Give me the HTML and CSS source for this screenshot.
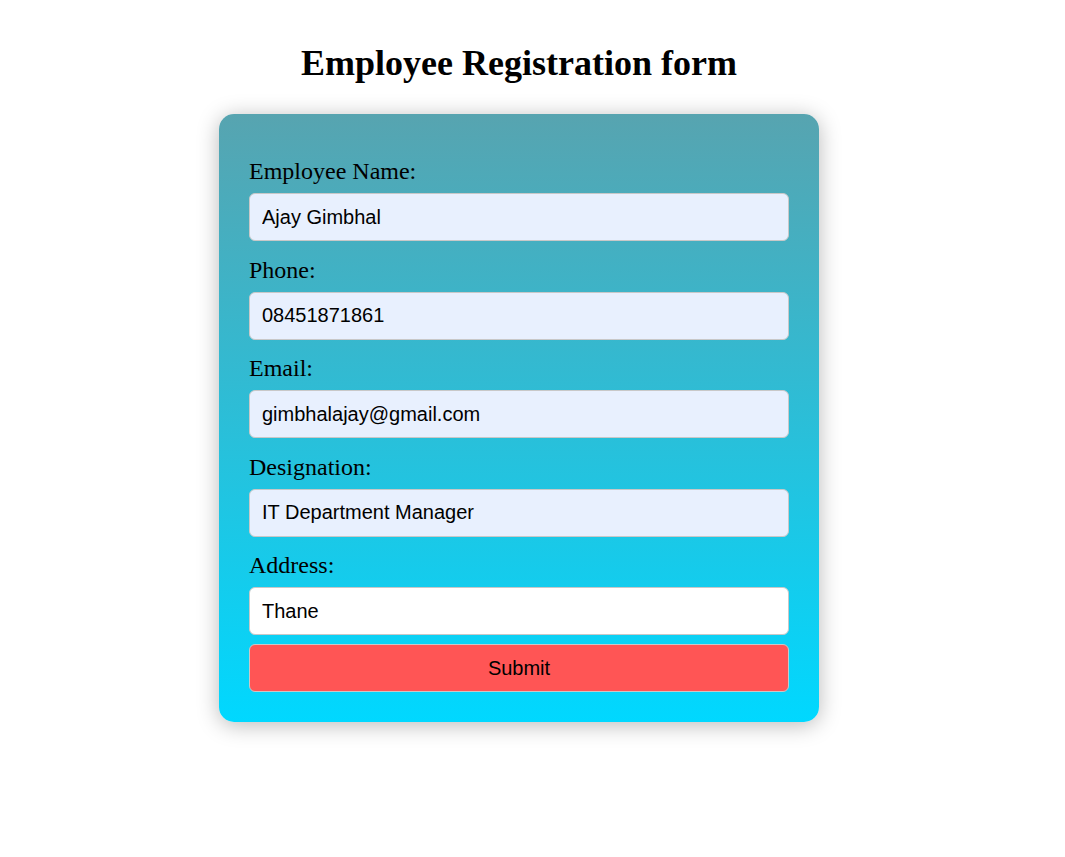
FILE: index.html
```html
<!DOCTYPE html>
<html lang="en">
<head>
<meta charset="utf-8">
<title>Employee Registration form</title>
<link rel="stylesheet" href="styles.css">
</head>
<body>
<div class="page">
  <h1 class="title">Employee Registration form</h1>
  <form class="card">
    <label class="field-label" for="name">Employee Name:</label>
    <input class="field filled" id="name" type="text" value="Ajay Gimbhal">
    <label class="field-label" for="phone">Phone:</label>
    <input class="field filled" id="phone" type="text" value="08451871861">
    <label class="field-label" for="email">Email:</label>
    <input class="field filled" id="email" type="text" value="gimbhalajay@gmail.com">
    <label class="field-label" for="designation">Designation:</label>
    <input class="field filled" id="designation" type="text" value="IT Department Manager">
    <label class="field-label" for="address">Address:</label>
    <input class="field" id="address" type="text" value="Thane">
    <button class="submit" type="button">Submit</button>
  </form>
</div>
</body>
</html>
```
FILE: styles.css
```css
html, body {
  margin: 0;
  padding: 0;
  background: #ffffff;
}

.page {
  display: flex;
  flex-direction: column;
  align-items: center;
  padding: 42px 27px 60px 0;
  font-family: "Liberation Serif", "Times New Roman", serif;
}

.title {
  margin: 0;
  font-size: 36px;
  font-weight: bold;
  color: #000;
  line-height: normal;
}

.card {
  margin-top: 30px;
  width: 600px;
  box-sizing: border-box;
  padding: 29px 30px 30px;
  border-radius: 15px;
  background: linear-gradient(to bottom, #57a4b0, #00d8ff);
  box-shadow: 0 3px 22px rgba(0, 0, 0, 0.28);
  display: flex;
  flex-direction: column;
}

.field-label {
  display: block;
  margin-top: 15.5px;
  font-size: 24px;
  line-height: normal;
  color: #000;
}

.field-label:first-child {
  margin-top: 15px;
}

.field {
  display: block;
  margin: 8px 0 0;
  width: 100%;
  height: 48px;
  box-sizing: border-box;
  padding: 0 12px;
  border: 1px solid #c8c8c8;
  border-radius: 6px;
  background: #ffffff;
  font-family: "Liberation Sans", Arial, sans-serif;
  font-size: 20px;
  color: #000;
  outline: none;
}

.field.filled {
  background: #e8f0fe;
}

.submit {
  display: block;
  margin-top: 9px;
  width: 100%;
  height: 48px;
  box-sizing: border-box;
  border: 1px solid #c8c8c8;
  border-radius: 6px;
  background: #ff5555;
  font-family: "Liberation Sans", Arial, sans-serif;
  font-size: 20px;
  color: #000;
  cursor: pointer;
}
```
